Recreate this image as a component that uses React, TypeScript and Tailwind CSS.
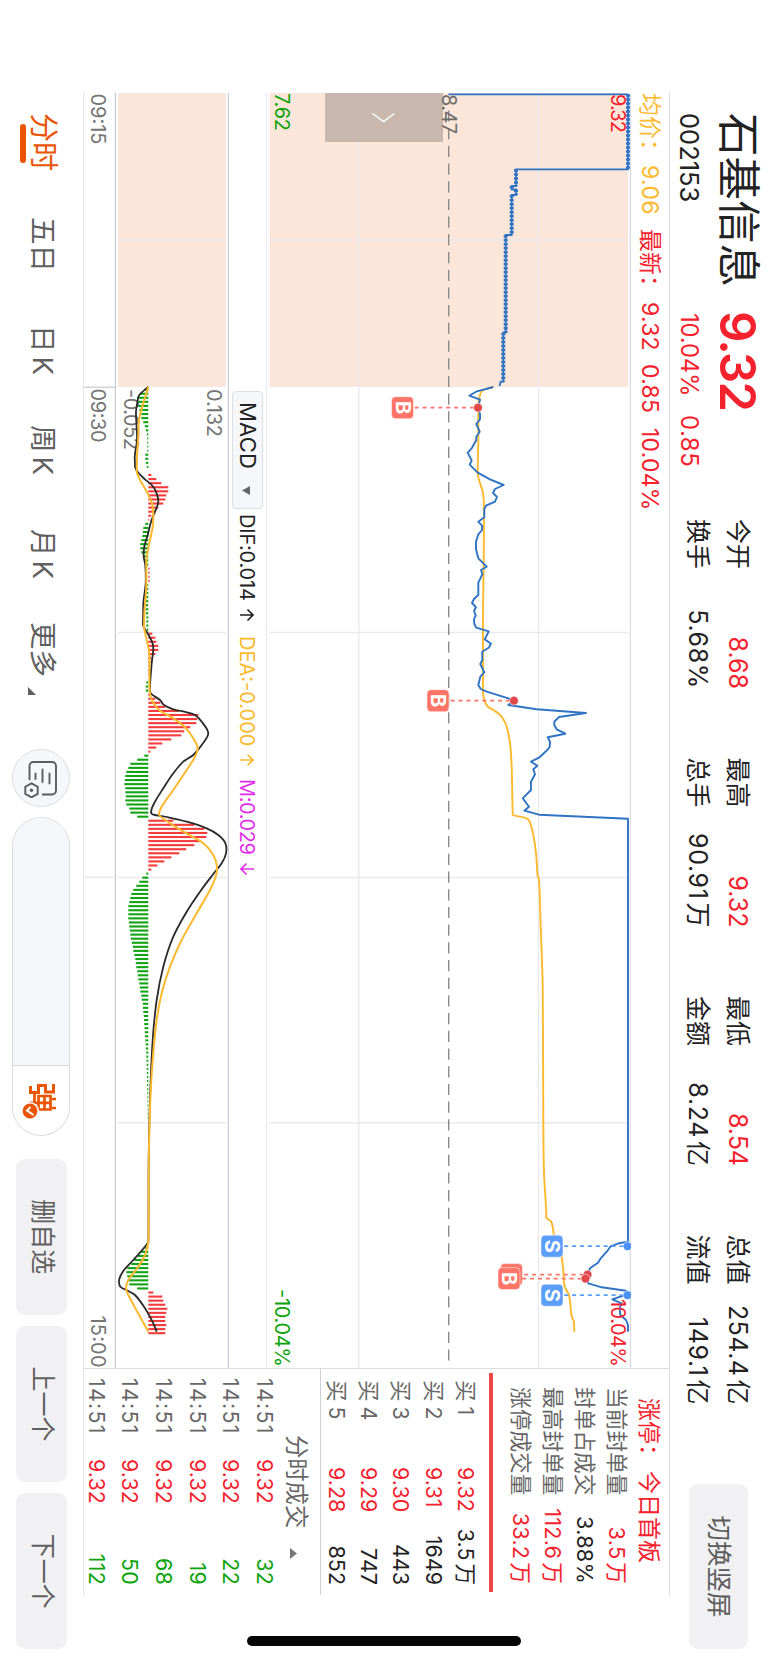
import { useMemo } from "react"
import clsx from "clsx"

type Pt = [number, number]

const RED = "#f5222d"
const GREEN = "#0aa30a"
const BLUE = "#2f73c4"
const AMBER = "#fdb92e"
const GRID = "#e9eaf0"

// ---------- data ----------
const STATS = [
  { top: ["今开", "8.68"], bottom: ["换手", "5.68%"] },
  { top: ["最高", "9.32"], bottom: ["总手", "90.91万"] },
  { top: ["最低", "8.54"], bottom: ["金额", "8.24亿"] },
  { top: ["总值", "254.4亿"], bottom: ["流值", "149.1亿"], plain: true },
]

const LIMIT_ROWS = [
  ["当前封单量", "3.5万", "red"],
  ["封单占成交", "3.88%", "black"],
  ["最高封单量", "112.6万", "red"],
  ["涨停成交量", "33.2万", "red"],
]

const BIDS = [
  ["买1", "9.32", "3.5万"],
  ["买2", "9.31", "1649"],
  ["买3", "9.30", "443"],
  ["买4", "9.29", "747"],
  ["买5", "9.28", "852"],
]

const TRADES = [
  ["14:51", "9.32", "32"],
  ["14:51", "9.32", "22"],
  ["14:51", "9.32", "19"],
  ["14:51", "9.32", "68"],
  ["14:51", "9.32", "50"],
  ["14:51", "9.32", "112"],
]

const TABS = [
  { name: "分时", w: "w-[104px]" },
  { name: "五日", w: "w-[108px]" },
  { name: "日K", w: "w-[100px]" },
  { name: "周K", w: "w-[104px]" },
  { name: "月K", w: "w-[93px]" },
]

// call auction, 09:15 - 09:30
const AUCTION: Pt[] = [
  [94.3, 140], [169.3, 140], [169.3, 252], [186, 252], [186, 256.3], [189.5, 256.3], [189.5, 252], [195, 252],
  [195, 256.3], [235, 256.3], [235, 262.3], [332.7, 262.3], [332.7, 264.7], [381.7, 264.7], [381.7, 267.3], [386, 268.5],
]

const PRICE: Pt[] = [
  [387, 274.7], [391.7, 292], [395.7, 298.7], [399.7, 288], [407.7, 290], [414, 288], [419.3, 288], [424, 291.7],
  [431.7, 288.3], [436.7, 291.7], [440, 291.7], [448.3, 296.3], [452.7, 300.3], [460.7, 296.3], [464.7, 298.3],
  [472.7, 290.3], [479.3, 278], [485, 264.3], [489, 273], [493, 275], [497, 271], [501.7, 273], [505.7, 282],
  [509.3, 283.7], [517.3, 283.7], [521.7, 289.7], [525.7, 286], [530, 286], [534.3, 289.7], [541.7, 292], [549.3, 292],
  [558.3, 289.7], [566.7, 281.3], [570, 287], [574.3, 285.7], [582.7, 289.7], [595, 289.7], [599, 294], [603, 296],
  [607.3, 292], [611, 294], [615.3, 292.3], [619.3, 294], [624, 293.7], [627.7, 291.7], [631.3, 279.3], [639.3, 283.3],
  [643.7, 277], [647.7, 279.3], [651.7, 285.7], [660, 285.7], [664, 287.7], [672.3, 283.7], [676.7, 287.7], [685, 289.7],
  [689, 287.3], [691.7, 281.3], [698.3, 259.7], [700.7, 254], [705, 259.7], [709.3, 231.3], [713, 182], [717, 209],
  [721.7, 213.7], [725, 213.7], [729.3, 211.3], [733.7, 202.7], [737.3, 220.3], [741.7, 218], [746.7, 218.3],
  [750, 220.7], [757.7, 229], [761.7, 237], [765.7, 230.7], [769.3, 234.7], [774.3, 233], [781.7, 237], [790, 237],
  [798.3, 245.3], [806.7, 239], [810.7, 243.7], [814.7, 229], [818.7, 140], [1241.7, 140], [1243.3, 149.3],
  [1246.3, 157.3], [1251.7, 161.3], [1258.3, 167.3], [1262.7, 170], [1268.3, 178], [1278.3, 182], [1283.3, 179.7],
  [1287.3, 166.3], [1290.7, 142], [1294, 140], [1299.3, 155.7], [1303.3, 146.3], [1308, 148.3], [1315, 147.7],
  [1320, 142], [1325, 140], [1331.7, 140],
]

const AVERAGE: Pt[] = [
  [387, 274.7], [390, 284.7], [395, 288], [406.7, 289.7], [443.3, 289.7], [473.3, 290.3], [480, 289], [491.7, 285.3],
  [506.7, 284], [563, 284.3], [613, 285], [693.3, 285], [700, 283.7], [706, 280.7], [710, 274.7], [714.3, 268.7],
  [719.3, 264.7], [726.7, 261.3], [743.3, 258], [766.7, 256.3], [797, 255.7], [814.7, 255.3], [818.3, 241.3],
  [822.7, 238], [835, 234.7], [853.3, 232], [876.7, 230.3], [879, 229], [926.7, 227.3], [986.7, 225.3], [1120, 224.7],
  [1173, 224], [1206.7, 222], [1217.7, 221.7], [1221.7, 216.7], [1236.7, 213.7], [1246.7, 209.7], [1253.3, 207],
  [1270, 204.7], [1286.7, 203.3], [1295, 199], [1316.7, 196.3], [1321.7, 194], [1331.7, 193.7],
]

const DIF: Pt[] = [
  [387, 619.7], [395, 628.7], [403, 630.7], [411.7, 632], [425, 631.5], [440, 631], [456.7, 633.3], [466.7, 633],
  [472.7, 629.7], [479.3, 623], [485, 616.3], [491.7, 612], [501.7, 609.7], [511.7, 613], [521.7, 617], [535, 620.3],
  [546.7, 623.7], [556.7, 624.3], [565, 622.7], [583.3, 622.3], [603.3, 624.7], [625, 625], [631.7, 621.3],
  [641.7, 616], [648.3, 614.7], [663.3, 616.3], [686.7, 618], [693.3, 617.3], [700, 608], [705, 604], [709.3, 594.7],
  [712.3, 581.3], [715, 573], [721.7, 566.3], [733.3, 559.7], [745, 566.3], [755, 574.7], [761.7, 584.7],
  [773.3, 594.7], [788.3, 604.7], [801.7, 613], [810.7, 616.7], [814.7, 614.7], [817.3, 599.7], [821.7, 581.3],
  [828.3, 561.3], [835, 549.7], [843.3, 542.6], [853.3, 542], [863.3, 546.3], [874, 554.7], [891.7, 568],
  [911.7, 581.3], [936.7, 594.7], [966.7, 604.7], [1000, 611.3], [1040, 615.3], [1100, 618], [1166.7, 619.4],
  [1236, 619.5], [1242.3, 619.7], [1260, 634.7], [1270, 644], [1279, 648.7], [1286.7, 647.7], [1290.7, 640.3],
  [1295, 633], [1308.3, 623], [1323.3, 614.7], [1331.7, 611.3],
]

const DEA: Pt[] = [
  [387, 619.7], [403, 624.7], [420, 629], [436.7, 629.7], [456.7, 631], [471.7, 631.3], [480, 628], [491.7, 621.3],
  [503.3, 616], [513.3, 614.7], [526.7, 615.3], [543.3, 618.7], [560, 621.7], [586.7, 621.7], [613.3, 623.7],
  [626.7, 624], [640, 621.3], [653.3, 618.7], [691.7, 618.3], [701.7, 615.3], [710.7, 608], [718.3, 594.7],
  [727.3, 583], [738.3, 574.7], [748.3, 570.3], [756.7, 573], [770, 581.3], [790, 594.7], [806.7, 606.3],
  [815, 608.7], [821, 601.3], [831.7, 584.7], [843.3, 564.7], [855, 554.7], [866.7, 551], [876.7, 552.3], [890, 558],
  [913.3, 571.3], [940, 586.3], [966.7, 598], [993.3, 606.3], [1020, 611.3], [1060, 615.3], [1100, 617.7],
  [1166.7, 619.3], [1236, 619.4], [1242.3, 619.7], [1255, 623], [1266.7, 629.7], [1280, 639.7], [1288.3, 642],
  [1295, 639.7], [1331.7, 619.7],
]

// one bar a minute, each run starts at the given minute
const BARS: { start: number; values: number[] }[] = [
  { start: 0, values: [-4, -8, -11, -10, -10, -9, -7, -7, -5, -3.5, -2.5, -1.5, -1, -1, -1, -1, -3, -3, -2.5, -1.5] },
  { start: 21, values: [3, 8, 13, 20, 20, 18, 17, 15, 10, 7, 3, 1] },
  { start: 33, values: [-3, -5, -5.5, -6, -7, -8, -8, -7, -5, -3.5, -2.5, 1.3, 1.3, 1.3, 1.3] },
  { start: 48, values: [-1, -1.5, -2, -2, -2.5, -2.5, -2.5, -2.5, -2, -2, -2, -1.5] },
  { start: 60, values: [4, 7, 8, 10, 10, 7, 3, 2, 1.5, 1.5, 1.5] },
  { start: 72, values: [-2, -2.5, -2.5, 2, 7, 12, 17, 30, 50, 49, 48, 42, 36, 33, 23, 14, 8, 2] },
  { start: 90, values: [-4, -11, -18, -20, -22, -23, -23.5, -24, -23, -23, -22.5, -23, -22, -19, -18, -11] },
  { start: 106, values: [25, 46, 56, 59, 58, 52, 46, 38, 31, 23, 16, 9, 3] },
  {
    start: 119,
    values: [
      -2, -6, -9, -12, -15, -17, -18, -19, -20, -20, -20, -20, -19.5, -19, -18.5, -18, -17.5, -16.5, -15.5, -15, -14,
      -13, -12.5, -12, -11, -10.5, -10, -9, -8.5, -8, -7, -6.5, -5.5, -5.3, -5, -4.5, -4.3, -4, -3.7, -3.5, -3.3, -3,
      -2.6, -2.3, -2.1, -2, -1.8, -1.7, -1.6, -1.5, -1.4, -1.3, -1.2, -1.1, -1, -0.9, -0.8, -0.8, -0.7, -0.6, -0.6,
    ],
  },
  { start: 211, values: [-3, -7, -10.5, -14, -17, -21, -22, -21, -20.5, -19, -11] },
  { start: 222, values: [5, 14, 15, 17, 19, 18, 17, 17, 18, 17, 17] },
]

// ---------- helpers ----------
const straight = (pts: Pt[]) => pts.map((p) => p.join(",")).join(" ")

function smooth(pts: Pt[]) {
  let d = `M${pts[0][0]} ${pts[0][1]}`
  for (let i = 0; i < pts.length - 1; i++) {
    const p0 = pts[i - 1] ?? pts[i]
    const p1 = pts[i]
    const p2 = pts[i + 1]
    const p3 = pts[i + 2] ?? p2
    // handles stay inside the segment so long flat runs do not overshoot
    const k = (p2[0] - p1[0]) / 3
    const s1 = (p2[1] - p0[1]) / (p2[0] - p0[0] || 1)
    const s2 = (p3[1] - p1[1]) / (p3[0] - p1[0] || 1)
    const flat = Math.abs(p2[1] - p1[1]) < 0.4
    const c1 = flat ? p1[1] : p1[1] + s1 * k
    const c2 = flat ? p2[1] : p2[1] - s2 * k
    d += `C${p1[0] + k} ${c1} ${p2[0] - k} ${c2} ${p2[0]} ${p2[1]}`
  }
  return d
}

// number with a small gap before 万 / 亿
function Amount({ value }: { value: string }) {
  const unit = /[万亿]$/.test(value) ? value.slice(-1) : ""
  return (
    <>
      {unit ? value.slice(0, -1) : value}
      {unit && <span className="ml-[3px] tracking-normal">{unit}</span>}
    </>
  )
}

function Tick({ x, y, w, fill, children }: { x: number; y: number; w: number; fill: string; children: string }) {
  return (
    <text x={x} y={y + 7.2} fontSize={20} fill={fill} textLength={w} lengthAdjust="spacing">
      {children}
    </text>
  )
}

function Marker({ x, dot, box, kind, faded }: { x: number; dot: number; box: number; kind: "B" | "S"; faded?: boolean }) {
  const color = kind === "B" ? "#ff7466" : "#5b9dfb"
  return (
    <g>
      <line x1={x} y1={dot + 4} x2={x} y2={box} stroke={color} strokeWidth={1.7} strokeDasharray="4 3.9" />
      <circle cx={x} cy={dot} r={4.4} fill={kind === "B" ? "#e0484a" : "#4a90f5"} stroke="#fff" strokeWidth={0.8} strokeOpacity={0.7} />
      <rect x={x - 11} y={box} width={22} height={22} rx={4} fill={color} stroke="#fff" strokeOpacity={0.5} />
      {!faded && (
        <text x={x} y={box + 18} fontSize={20} fontWeight={700} fill="#fff" textAnchor="middle">
          {kind}
        </text>
      )}
    </g>
  )
}

function PriceChart() {
  return (
    <svg className="block h-[364px] w-[1276px] shrink-0" viewBox="93 137 1276 364">
      <rect x={93} y={140} width={294} height={358.5} fill="#fce6d9" />
      <g stroke={GRID} strokeWidth={1.4}>
        <line x1={93} y1={137.6} x2={1368} y2={137.6} stroke="#dcdde3" />
        <line x1={93} y1={229.5} x2={1368} y2={229.5} />
        <line x1={93} y1={409.2} x2={1368} y2={409.2} />
        {[240, 632.5, 877.5, 1122.7].map((x) => (
          <line key={x} x1={x} y1={140} x2={x} y2={498.5} />
        ))}
      </g>
      <line x1={110.4} y1={319.3} x2={1363} y2={319.3} stroke="#8a8a8a" strokeWidth={1.4} strokeDasharray="11.2 6.5" />
      <rect x={93} y={325} width={49} height={118} fill="#c7b7ad" />
      <polyline points="113.5,395.5 121.5,384.5 113.5,373.5" fill="none" stroke="#fff" strokeWidth={1.5} />

      <path d={smooth(AVERAGE)} fill="none" stroke={AMBER} strokeWidth={1.9} />
      <line x1={94.3} y1={319.5} x2={94.3} y2={140} stroke={BLUE} strokeWidth={1.8} />
      <polyline points={straight(AUCTION)} fill="none" stroke={BLUE} strokeWidth={1.8} />
      {AUCTION.slice(1).map(([x, y], i) =>
        AUCTION[i][1] === y ? (
          <line key={i} x1={AUCTION[i][0]} y1={y} x2={x} y2={y} stroke={BLUE} strokeWidth={4} strokeDasharray="2.5 1.5" />
        ) : null,
      )}
      <polyline points={straight(PRICE)} fill="none" stroke={BLUE} strokeWidth={1.9} strokeLinejoin="round" />

      <Tick x={94} y={150} w={39} fill={RED}>9.32</Tick>
      <Tick x={94} y={319} w={40} fill="#6b6b6b">8.47</Tick>
      <Tick x={93} y={486.3} w={38} fill={GREEN}>7.62</Tick>
      <Tick x={1299} y={150} w={68} fill={RED}>10.04%</Tick>
      <Tick x={1289} y={486.3} w={78} fill={GREEN}>-10.04%</Tick>

      <Marker x={407.7} dot={290} box={354.5} kind="B" />
      <Marker x={700.7} dot={254} box={319} kind="B" />
      <Marker x={1246.2} dot={140.5} box={205} kind="S" />
      <Marker x={1295.2} dot={140.5} box={205} kind="S" />
      <Marker x={1274.6} dot={180.5} box={245.5} kind="B" faded />
      <Marker x={1278.6} dot={182.5} box={248} kind="B" />
    </svg>
  )
}

function MacdChart() {
  const bars = useMemo(() => BARS.flatMap((b) => b.values.map((v, i) => ({ x: 389.6 + (b.start + i) * 4.067, v }))), [])
  return (
    <svg className="block h-[146px] w-[1276px] shrink-0" viewBox="93 539 1276 146">
      <rect x={93} y={542} width={294} height={108} fill="#fce6d9" />
      <g stroke={GRID} strokeWidth={1.4}>
        {[240, 632.5, 877.5, 1122.7].map((x) => (
          <line key={x} x1={x} y1={542} x2={x} y2={650} />
        ))}
        <line x1={877.2} y1={653} x2={877.2} y2={685} />
      </g>
      <g stroke="#c9c9d2" strokeWidth={1.2}>
        <line x1={93} y1={539.6} x2={1368} y2={539.6} />
        <line x1={93} y1={652.6} x2={1368} y2={652.6} />
        <line x1={387.2} y1={653} x2={387.2} y2={685} />
      </g>
      <Tick x={389} y={554} w={48} fill="#757575">0.132</Tick>
      <Tick x={389} y={637} w={61} fill="#757575">-0.052</Tick>
      {bars.map(({ x, v }) => (
        <rect key={x} x={x - 1} y={v > 0 ? 619.7 - v : 619.7} width={2.1} height={Math.abs(v)} fill={v > 0 ? "#f53c3c" : "#12a512"} />
      ))}
      <path d={smooth(DIF)} fill="none" stroke="#2a2a2a" strokeWidth={1.8} />
      <path d={smooth(DEA)} fill="none" stroke={AMBER} strokeWidth={2} />
      <Tick x={93.5} y={670} w={51} fill="#757575">09:15</Tick>
      <Tick x={388.5} y={670} w={54} fill="#757575">09:30</Tick>
      <Tick x={1315.5} y={670} w={52} fill="#757575">15:00</Tick>
    </svg>
  )
}

function Arrow({ down }: { down?: boolean }) {
  return (
    <svg
      className={clsx("ml-[7px] h-[16px] w-[14px]", down && "rotate-180")}
      viewBox="0 0 14 16"
      fill="none"
      stroke="currentColor"
      strokeWidth={1.7}
    >
      <path d="M7 15V2M1.5 7.5 7 2l5.5 5.5" />
    </svg>
  )
}

function Header() {
  return (
    <header className="flex h-[98px] shrink-0 pl-[113px]">
      <div className="w-[198px] pt-[2px]">
        <div className="h-[56px] text-[43.5px] leading-[54px] whitespace-nowrap text-[#222]">石基信息</div>
        <div className="h-[40px] text-[25.5px] leading-[42px]">002153</div>
      </div>
      <div className="w-[208px] pt-[2px] text-[#f5222d]">
        <div className="h-[56px] text-[49px] leading-[58px] font-semibold tracking-[-0.035em]">9.32</div>
        <div className="flex h-[40px] gap-[22px] pl-[2px] text-[24px] leading-[42px]">
          <span className="w-[80px] tracking-[-0.01em]">10.04%</span>
          <span className="tracking-[0.02em]">0.85</span>
        </div>
      </div>
      {STATS.map((s) => (
        <div key={s.top[0]} className="mr-[68.5px] w-[170px] shrink-0 pt-[10px] text-[25px] leading-[40px]">
          <div className="flex justify-between whitespace-nowrap">
            <span>{s.top[0]}</span>
            <span className={clsx(s.plain ? "tracking-[0.02em]" : "text-[#f5222d]")}>
              <Amount value={s.top[1]} />
            </span>
          </div>
          <div className="flex justify-between whitespace-nowrap">
            <span>{s.bottom[0]}</span>
            <span className="tracking-[0.025em]">
              <Amount value={s.bottom[1]} />
            </span>
          </div>
        </div>
      ))}
      <button className="mt-[20px] ml-[11px] h-[59px] w-[165px] shrink-0 rounded-[9px] bg-[#f1f1f4] text-[25.5px] text-[#5c5c5c]">
        切换竖屏
      </button>
    </header>
  )
}

function SidePanel() {
  return (
    <aside className="flex h-[586px] w-[227px] shrink-0 flex-col border-l border-[#dcdde3]">
      <div className="flex h-[35.5px] shrink-0 items-center gap-[5px] pt-[4px] pl-[29px] text-[23px] whitespace-nowrap text-[#f5222d]">
        <span className="w-[68px] shrink-0">涨停：</span>
        <span>今日首板</span>
      </div>
      <div className="pr-[11px] pl-[18px] text-[21.7px] leading-[32.3px]">
        {LIMIT_ROWS.map(([label, value, tone]) => (
          <div key={label} className="flex justify-between whitespace-nowrap">
            <span className="text-[#666]">{label}</span>
            <span className={clsx("tracking-[0.01em]", tone === "red" ? "text-[#f5222d]" : "text-[#222]")}>
              <Amount value={value} />
            </span>
          </div>
        ))}
      </div>
      <div className="mt-[11.5px] ml-[4px] h-[4px] w-[219px] shrink-0 bg-[#ee4848]" />
      <div className="mt-[7px] pr-[10px] pl-[11px] text-[21.5px] leading-[32.2px]">
        {BIDS.map(([label, price, vol]) => (
          <div key={label} className="flex">
            <span className="w-[87px] text-[#666]">
              {label[0]}
              <span className="ml-[5px]">{label[1]}</span>
            </span>
            <span className="text-[#f5222d]">{price}</span>
            <span className="ml-auto">
              <Amount value={vol} />
            </span>
          </div>
        ))}
      </div>
      <div className="h-px shrink-0 bg-[#cfcfd8]" />
      <div className="flex h-[39px] shrink-0 items-center pt-[10px] pl-[66px] text-[23.3px] text-[#666]">
        分时成交
        <svg className="mt-[4px] ml-[20px] h-[7px] w-[11px]" viewBox="0 0 11 7" fill="#777">
          <path d="M5.5 0 11 7H0z" />
        </svg>
      </div>
      <div className="pr-[10px] pl-[11px] text-[21.5px] leading-[33.6px]">
        {TRADES.map(([time, price, vol], i) => (
          <div key={i} className="flex">
            <span className="-ml-[2px] w-[81px] tracking-[0.055em] text-[#666]">{time}</span>
            <span className="text-[#f5222d]">{price}</span>
            <span className="ml-auto tracking-[0.01em] text-[#0aa30a]">{vol}</span>
          </div>
        ))}
      </div>
    </aside>
  )
}

function Toolbar() {
  return (
    <nav className="flex h-[83px] shrink-0 items-center pl-[113px] text-[#5f5f5f]">
      {TABS.map((t, i) => (
        <div
          key={t.name}
          className={clsx(
            "relative shrink-0 pb-[3px] leading-[36px] whitespace-nowrap",
            t.w,
            i === 0 ? "text-[29px] text-[#ea5504]" : "text-[27.5px]",
          )}
        >
          {t.name.replace("K", "")}
          {t.name.endsWith("K") && <span className="ml-[4px]">K</span>}
          {i === 0 && <span className="absolute top-[35px] left-[11px] h-[6px] w-[39px] rounded-full bg-[#ea5504]" />}
        </div>
      ))}
      <div className="flex w-[126.5px] shrink-0 items-center pb-[3px] text-[27.5px] leading-[36px]">
        更多
        <svg className="mt-[22px] ml-[10px] h-[8px] w-[8px]" viewBox="0 0 8 8" fill="#5f5f5f">
          <path d="M8 0v8H0z" />
        </svg>
      </div>
      <button className="flex h-[58px] w-[58px] shrink-0 items-center justify-center rounded-full border border-[#dcdce4] bg-[#f6f7fa]">
        <svg className="mt-[1px] ml-[2px] h-[34px] w-[38px]" viewBox="0 0 38 34" fill="none" stroke="#5c5c5c" strokeWidth={1.9}>
          <path d="M20 28.5H6a4 4 0 0 1-4-4V6a4 4 0 0 1 4-4h24.5a4 4 0 0 1 4 4v10" />
          <path d="M13.5 8.500h10M9.500 15.500h12.500M13.500 22.500h5.500" strokeLinecap="round" />
          <path d="m23.300 26.500 3.400-6.200h7.200l3.400 6.200-3.400 6.200h-7.200z" />
          <circle cx={30.3} cy={26.5} r={1.3} fill="#5c5c5c" strokeWidth={1} />
        </svg>
      </button>
      <div className="ml-[10.5px] flex h-[58px] w-[319px] shrink-0 overflow-hidden rounded-full border border-[#d9d9e0]">
        <div className="w-[248px] border-r border-[#d9d9e0] bg-[#f6f7fa]" />
        <div className="flex flex-1 items-center pl-[18px]">
          <svg className="mt-[5px] h-[34px] w-[36px]" viewBox="0 0 36 34" fill="none" stroke="#ea5504" strokeWidth={3}>
            <path d="M0 2.500h8v8H1.500v7h7v8H2" />
            <path d="M15 0v4M24 0v4M12 5.500h13.500v12H12zM12 11.500h13.500M18.800 5v21.500M10 21.500h9" strokeWidth={2.7} />
            <circle cx={27} cy={26} r={8.2} fill="#ea5504" stroke="#fff" strokeWidth={1.6} />
            <path d="m23 25.500 3.500 3.500 4.500-6.500" stroke="#fff" strokeWidth={1.9} />
          </svg>
        </div>
      </div>
      <div className="ml-[23px] flex gap-[11.5px] text-[25px]">
        {["删自选", "上一个", "下一个"].map((t) => (
          <button key={t} className="h-[51px] w-[155.7px] shrink-0 rounded-[9px] bg-[#f1f1f4] pb-[2px]">
            {t}
          </button>
        ))}
      </div>
    </nav>
  )
}

export default function App() {
  return (
    <div className="relative h-[1663px] w-[768px] overflow-hidden bg-white">
      {/* landscape screen shown on a portrait page */}
      <div className="relative flex h-[768px] w-[1663px] origin-top-left translate-x-[768px] rotate-90 flex-col bg-white font-['Inter','Noto_Sans_CJK_SC',sans-serif] text-[#222]">
        <Header />
        <div className="ml-[93px] h-px w-[1502px] shrink-0 bg-[#dcdde3]" />
        <main className="ml-[93px] flex h-[586px] shrink-0">
          <section className="flex w-[1275px] shrink-0 flex-col">
            <div className="flex h-[38px] shrink-0 items-center text-[23px] whitespace-nowrap text-[#f5222d]">
              <span className="w-[72px] text-[#fdb92e]">均价：</span>
              <span className="w-[64px] tracking-[0.015em] text-[#fdb92e]">9.06</span>
              <span className="w-[73px]">最新：</span>
              <span className="w-[62px] tracking-[0.01em]">9.32</span>
              <span className="w-[64px] tracking-[0.01em]">0.85</span>
              <span className="tracking-[0.01em]">10.04%</span>
            </div>
            <PriceChart />
            <div className="flex h-[38px] shrink-0 items-center border-t border-[#e6e7ed] text-[20px] whitespace-nowrap">
              <div className="ml-[298px] flex h-[31px] w-[118px] shrink-0 items-center rounded-[4px] border border-[#dcdde3] bg-[#f6f7fa] pl-[10px] text-[22px] tracking-[0.01em]">
                MACD
                <svg className="mt-[2px] ml-[17px] h-[8px] w-[9px]" viewBox="0 0 9 8" fill="#666">
                  <path d="M0 0h9L4.500 8z" />
                </svg>
              </div>
              <div className="flex w-[122px] items-center pl-[5px] tracking-[-0.01em]">
                DIF:0.014
                <Arrow />
              </div>
              <div className="flex w-[143px] items-center pl-[5px] text-[#fdb92e]">
                DEA:-0.000
                <Arrow />
              </div>
              <div className="flex items-center pl-[5px] tracking-[-0.02em] text-[#e02fe8]">
                M:0.029
                <Arrow down />
              </div>
            </div>
            <MacdChart />
          </section>
          <SidePanel />
        </main>
        <div className="absolute top-[684px] left-[93px] h-px w-[1502px] bg-[#e6e6ea]" />
        <Toolbar />
        <div className="absolute top-[247px] left-[1636px] h-[274px] w-[10px] rounded-full bg-[#060606]" />
      </div>
    </div>
  )
}
